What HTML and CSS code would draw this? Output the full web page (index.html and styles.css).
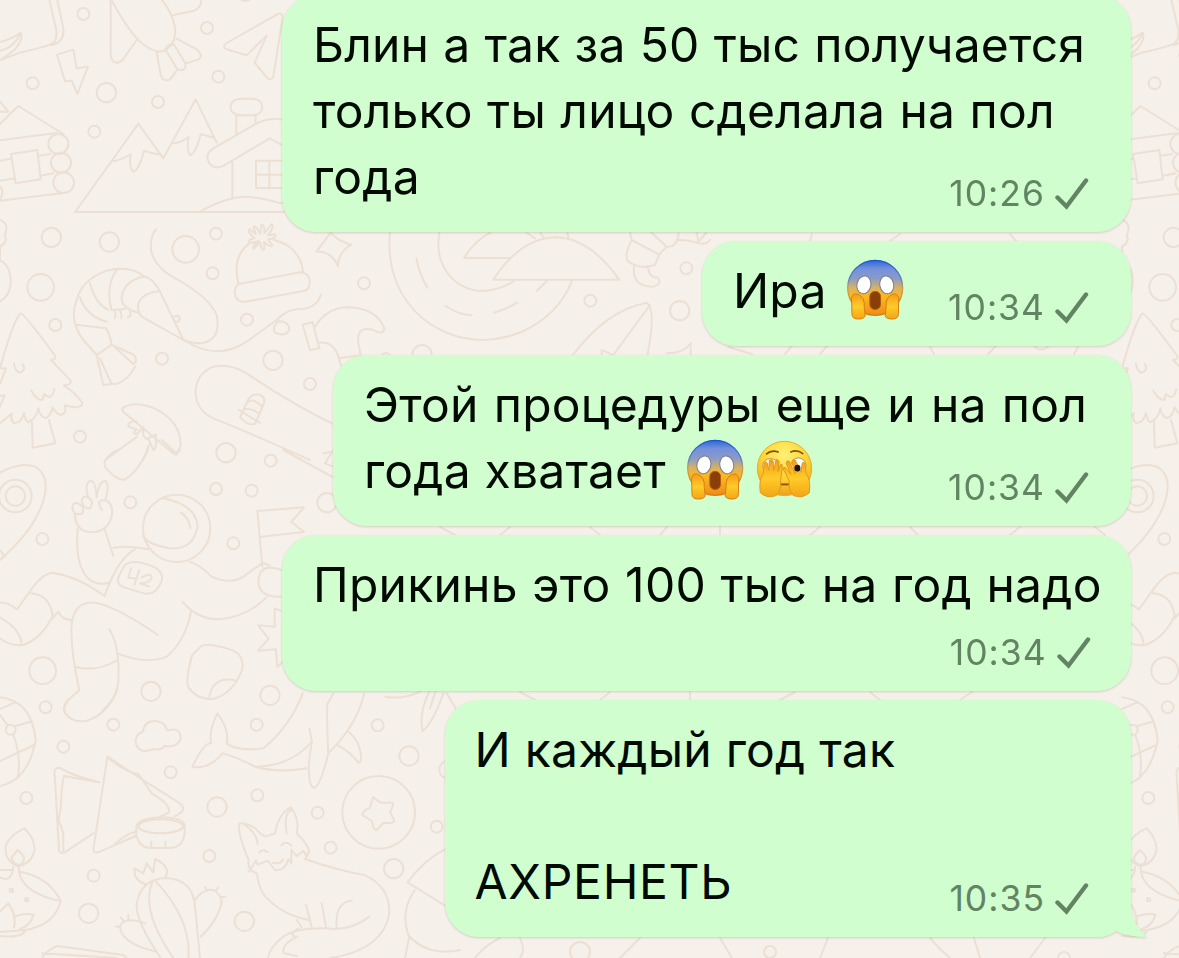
FILE: index.html
```html
<!DOCTYPE html>
<html lang="ru">
<head>
<meta charset="utf-8">
<title>Чат</title>
<link rel="stylesheet" href="styles.css">
</head>
<body>
<main class="chat">
<svg class="wallpaper" viewBox="0 0 1179 958" aria-hidden="true">
<defs>
<g id="tile">
 <g class="thirds" transform="scale(.33333)">
  <path d="M148 0Q160 50 168 85Q175 125 150 134Q120 145 60 158L0 181M172 0L190 85Q195 125 155 136M0 126Q35 118 62 98Q72 115 45 148Q25 166 0 181M0 152Q35 148 62 102"/>
  <path d="M171 164L220 149L230 205L264 200L232 282L215 242L195 243Z"/>
  <path d="M332 0V165Q335 190 353 188Q365 186 372 174L410 120M334 0Q375 75 410 115Q440 146 470 154Q495 157 508 140Q530 120 525 80Q515 35 486 0M516 46L582 32Q603 25 604 0M530 116L590 148Q612 168 595 178L558 190M470 156L482 225Q490 248 511 238L532 208M496 148L530 205Q545 217 556 204V190L522 134Q505 130 496 148"/>
  <path d="M675 132L835 41Q850 38 847 58L820 230Q812 244 802 234L764 188L800 106L740 166L680 148Q668 142 675 132Z"/>
  <path d="M225 636L330 490L415 371L490 475L587 298L650 428M342 484Q370 477 392 463Q386 505 400 515Q418 508 432 452Q455 461 484 464M521 430Q550 427 566 410Q558 455 572 466Q590 454 602 402L644 414M225 636H870M605 632Q680 590 740 590Q800 595 840 610L870 606"/>
  <path d="M725 296H755C798 296 798 346 755 346H725C680 346 680 296 725 296ZM709 346V405M767 346V370M866 362Q810 348 765 373L640 445Q612 462 628 490Q644 510 672 497L809 415L870 448M697 488V592M768 482H860M768 482V564H860M768 524H860M808 482V564"/>
  <path d="M0 372L55 318L190 402M0 421L170 399M0 602L195 578M33 462L112 450L122 538L47 550ZM0 482L33 476M113 468L150 462M0 542L45 535M122 527L160 520M0 335H25L0 305M0 558Q14 575 0 600"/>
  <circle cx="175" cy="432" r="30"/><circle cx="183" cy="488" r="30"/><circle cx="191" cy="548" r="31"/>
  <circle cx="250" cy="42" r="18"/><circle cx="98" cy="250" r="18"/><circle cx="319" cy="278" r="29"/><circle cx="474" cy="306" r="18"/><circle cx="283" cy="395" r="18"/><circle cx="621" cy="84" r="18"/><circle cx="655" cy="230" r="18"/><path d="M724 0Q736 6 748 0"/>
 </g>
 <g class="thirds" transform="translate(0 220) scale(.33333)">
  <circle cx="154" cy="52" r="29"/><circle cx="328" cy="66" r="29"/><circle cx="122" cy="202" r="40"/><circle cx="557" cy="88" r="40"/><circle cx="648" cy="41" r="18"/><circle cx="638" cy="160" r="18"/><circle cx="166" cy="315" r="18"/><circle cx="741" cy="299" r="18"/><circle cx="486" cy="416" r="18"/><circle cx="819" cy="421" r="29"/><circle cx="930" cy="492" r="18"/><circle cx="240" cy="650" r="18"/><circle cx="678" cy="698" r="29"/>
  <path d="M0 0Q30 10 14 45Q25 65 0 80V122Q34 135 32 195Q25 232 0 244"/>
  <path d="M469 28Q450 45 453 90Q464 145 535 180Q630 235 650 285Q665 360 605 370Q575 370 550 360L480 215Q460 175 430 168Q390 135 320 152Q245 180 230 240Q205 300 250 360L290 405L335 374Q330 345 318 325L228 314M550 360L425 290Q400 255 430 230Q450 215 480 214M430 170Q375 180 365 230Q362 265 415 278M350 150Q315 200 335 270L375 267M270 190Q285 250 325 270M240 232Q260 290 320 305M344 295Q348 285 345 270M364 295Q366 285 360 270M384 292Q396 285 390 275M290 405L310 495L335 492L300 415M335 374L402 405Q415 425 400 432L343 380M405 440Q385 480 350 492L335 492"/>
  <circle cx="530" cy="296" r="9"/>
  <path d="M552 360Q650 425 740 365L830 300Q860 270 890 268Q950 268 962 225M835 304Q870 305 868 330Q855 352 825 338Q815 322 835 304"/>
  <path d="M715 190Q695 105 752 68M823 60Q900 80 909 155M715 192L900 157Q932 160 929 190Q928 210 910 213L732 246Q707 246 704 218Q704 200 715 192M768 42L748 28Q740 35 764 54Q740 60 750 68Q770 66 775 62Q752 84 762 86L780 66Q785 95 793 88L792 66Q810 84 817 76L804 58Q832 55 825 43L804 46Q825 17 815 12L793 40Q794 10 784 15L781 42Q765 12 760 22Z"/>
  <path d="M0 445Q40 300 62 280Q70 278 166 408Q168 420 153 420L212 482Q215 495 192 496Q230 522 248 550Q242 570 194 556Q202 580 182 585Q166 580 158 562Q150 592 136 594Q120 590 115 565Q110 595 84 607Q75 600 72 578Q65 610 42 609Q30 600 36 580L0 610M42 430Q45 455 60 458Q80 450 68 432M94 512Q110 540 127 540L132 522Q155 545 163 508M0 492L18 445H0M0 560L14 527H0M96 602L98 683L166 670L147 600"/>
  <path d="M366 566Q400 540 465 566Q542 605 542 675Q535 702 520 700L370 576ZM410 603Q380 605 386 620L411 628Q392 640 411 642L430 620Q425 650 440 657L468 643Q470 690 460 690L447 660M316 720L411 650M430 720L447 675M528 700L485 660"/>
  <path d="M1000 612Q880 555 740 460Q690 430 640 440Q590 460 586 515Q588 570 640 595Q730 630 930 720M745 538Q755 520 780 524Q800 535 790 555L765 612Q745 618 720 592ZM740 550Q755 530 785 558M730 570Q750 560 776 580M716 570L780 608"/>
 </g>
 <g class="thirds" transform="translate(0 450) scale(.33333)">
  <path d="M0 68Q60 34 105 50Q150 75 132 145Q108 235 0 330M0 300L14 320"/><circle cx="46" cy="138" r="49"/><circle cx="46" cy="138" r="29"/>
  <circle cx="127" cy="267" r="18"/><circle cx="391" cy="157" r="18"/><circle cx="648" cy="117" r="18"/><circle cx="755" cy="122" r="18"/><circle cx="812" cy="32" r="18"/><circle cx="700" cy="280" r="18"/><circle cx="981" cy="158" r="29"/><circle cx="128" cy="662" r="40"/><circle cx="453" cy="724" r="29"/><circle cx="810" cy="736" r="29"/>
  <path d="M350 0Q300 30 318 55Q350 90 372 90Q410 70 444 0M516 0L528 15L540 0M850 0L1000 82M1000 0L975 40L1000 50M970 10L1000 5"/>
  <circle cx="530" cy="235" r="101"/><path d="M487 144Q590 165 593 230Q580 300 510 295Q440 282 430 258M543 188Q568 205 571 234"/>
  <path d="M265 145Q250 95 275 92Q287 98 290 142Q296 95 315 93Q330 100 316 150Q340 160 336 195Q325 245 275 247Q225 245 224 190M306 180Q285 150 315 150M245 152Q248 138 262 140Q285 155 270 175Q250 178 245 152ZM224 190Q208 165 228 158Q255 165 248 190Q234 195 224 190M233 237Q225 340 260 380Q285 410 326 398M314 237L340 318M340 293Q390 285 445 298M404 298Q350 330 314 438Q235 380 158 368Q130 370 100 410L51 478Q20 455 0 458M93 430Q150 435 158 498Q125 565 70 585Q30 590 0 565M0 503Q60 535 65 582M158 505L175 485Q185 510 215 510"/>
  <path d="M375 345Q400 325 460 350Q490 365 486 390Q470 435 435 431L375 413Q345 405 358 375ZM393 355L385 383L410 386M418 360L403 405M425 383Q455 365 455 385Q445 400 420 400L448 410"/>
  <path d="M474 555Q320 450 265 458Q215 465 214 540Q215 620 238 720L205 750Q188 770 195 788M328 538Q360 590 355 690Q352 745 308 780M225 650Q290 668 352 630M352 610Q440 645 500 620Q555 575 573 485M548 456Q595 510 660 508Q740 500 800 442M568 335Q600 345 635 380Q690 405 730 380L783 342Q795 335 810 350M787 350L772 183L912 172L874 216L912 246L784 260M845 360Q775 335 775 398Q780 445 848 440"/>
  <path d="M605 587Q640 580 700 602Q735 620 726 660Q700 730 640 747Q590 750 564 710Q557 680 577 615ZM628 740Q640 675 710 692M850 485L824 475V530L774 526L806 566L774 602L828 598L832 650L855 630"/>
 </g>
 <g class="thirds" transform="translate(0 690) scale(.33333)">
  <path d="M0 22Q95 32 107 150Q85 270 0 288M0 57L44 38M47 108L92 95M22 105L0 75M0 213L100 166M40 135Q65 200 53 265"/><circle cx="32" cy="119" r="15"/>
  <circle cx="137" cy="52" r="18"/><circle cx="340" cy="104" r="18"/><circle cx="190" cy="170" r="18"/><circle cx="79" cy="324" r="18"/><circle cx="512" cy="247" r="18"/><circle cx="281" cy="557" r="18"/><circle cx="266" cy="670" r="29"/><circle cx="628" cy="498" r="18"/><circle cx="651" cy="351" r="29"/><circle cx="772" cy="316" r="18"/><circle cx="770" cy="104" r="18"/><circle cx="733" cy="694" r="29"/><circle cx="953" cy="368" r="18"/><circle cx="992" cy="473" r="18"/><circle cx="1133" cy="106" r="18"/><circle cx="1227" cy="198" r="29"/><circle cx="1181" cy="536" r="29"/><circle cx="1310" cy="410" r="18"/><circle cx="1345" cy="239" r="27"/>
  <path d="M205 28Q185 50 195 68Q215 100 260 92Q320 75 352 0"/>
  <path d="M429 125Q433 92 467 93Q495 95 502 122Q540 108 542 145Q535 175 492 168Q485 182 460 177Q420 195 407 160Q404 132 429 125Z"/>
  <path d="M298 277Q220 258 178 233Q160 233 164 255L177 480Q180 492 193 488L280 430M298 277L192 258Q184 290 183 345L176 390L190 430V488M322 200L280 480Q282 490 295 487L407 438M322 200Q420 265 540 340Q565 360 525 378M322 200Q370 245 415 252L455 310Q515 345 506 368L480 380M407 425Q380 430 345 462"/>
  <ellipse cx="482" cy="409" rx="67" ry="21"/><path d="M409 410V435Q418 475 455 474H508Q548 474 554 430V405Q545 382 482 382Q415 385 409 410M454 455V470M496 455V470"/>
  <path d="M73 415Q108 450 103 485Q90 525 52 528Q10 510 18 465Q30 435 73 415ZM53 480Q85 505 64 522Q40 530 35 502ZM40 530Q35 580 0 562M0 540H37M56 532Q55 600 165 630L182 632Q145 560 60 545M182 632Q165 705 75 720L0 726M75 720Q70 745 0 738M0 665L25 640Q50 675 42 712M42 680Q70 668 101 674Q90 710 60 716"/><circle cx="34" cy="601" r="5"/><circle cx="80" cy="629" r="5"/>
  <path d="M577 230Q610 160 634 158Q625 125 652 70Q690 120 680 160Q710 185 790 175Q870 110 908 10M577 230Q625 240 668 190Q720 205 765 230Q840 250 920 235M765 230Q870 230 936 155L928 115M936 155Q915 270 940 294Q960 295 985 190Q980 110 982 42L1000 10M1092 10Q1075 100 985 190M1046 126Q1080 150 1084 205Q1080 225 1072 214Q1050 185 1014 166"/>
  <circle cx="1136" cy="367" r="109"/><path d="M1119 321L1141 338H1177Q1184 342 1170 365L1183 392Q1182 402 1150 398L1130 420Q1120 423 1116 393L1087 375Q1085 365 1110 353Z"/>
  <path d="M1156 20Q1210 30 1260 5M1290 0Q1255 70 1268 124Q1300 95 1330 10M1308 0L1290 55M1340 10L1370 60"/>
  <path d="M770 550Q740 540 746 510Q712 430 718 400Q760 402 780 430L797 440L825 430Q835 370 873 352Q900 390 890 430Q925 465 928 485L915 507M735 405Q770 430 773 462M860 430Q850 370 873 360M746 545L768 512L773 524L803 512L825 540Q855 545 865 508L874 520V480L890 498L910 482L917 495L928 485M778 488Q785 475 803 486M844 466Q858 450 874 466M818 518Q838 525 850 508M915 507Q1010 540 1095 556Q1170 590 1168 670Q1150 780 990 804M770 550Q780 610 805 628Q850 675 926 690M918 645L935 710M965 640L978 712M1055 632Q1005 635 1010 712M1108 680Q1050 725 980 715Q890 712 850 740Q810 770 804 804M890 690L905 712M895 715Q860 740 892 740Q840 765 852 790L890 798"/>
  <path d="M435 582Q400 570 404 535L430 550L440 520L460 548L465 507Q515 530 496 562M482 804Q405 690 410 640Q425 565 500 564Q580 570 585 650L600 804M458 575Q420 660 520 804M468 575Q575 690 565 804M583 632Q610 595 640 600Q675 620 660 655Q645 700 602 740M470 785Q360 760 360 708Q375 678 435 700M361 682L372 692M348 710H360M385 675V690M615 592L622 602M655 592L648 602M675 620L663 622M126 804Q140 780 172 768L370 795L380 804M126 790L350 804"/>
  <path d="M1340 475Q1270 510 1223 577L1340 650M1244 600Q1200 665 1225 735Q1280 800 1380 780M1228 740L1215 804"/>
 </g>
</g>
</defs>
<g class="ink">
 <use href="#tile"/><use href="#tile" x="1122"/>
 <g class="thirds" transform="translate(280 220) scale(.33333)">
  <path d="M110 94L152 38Q175 65 215 74Q175 95 174 138Q155 95 110 94"/>
  <circle cx="252" cy="190" r="18"/><circle cx="931" cy="242" r="18"/><circle cx="1219" cy="145" r="18"/><circle cx="1199" cy="272" r="29"/><circle cx="426" cy="404" r="29"/><circle cx="317" cy="415" r="16"/>
  <path d="M330 38C310 230 450 360 612 360C735 355 835 285 875 184M478 38C460 150 535 213 612 213Q665 208 700 184M409 114Q418 165 442 202M497 258Q535 284 575 286M642 278Q680 268 712 248M770 213L800 184M552 114H690M552 114Q585 60 632 38M740 38L765 55M640 179H1018Q930 55 828 52Q720 55 640 179M782 38L790 52M862 38L866 54"/>
  <path d="M68 314L98 306L118 385L90 390ZM104 322Q140 262 205 262Q290 265 313 325Q310 348 280 330Q225 315 236 375L242 406L176 415Q165 365 118 368M176 415L185 440"/>
  <path d="M1050 38L1055 60L1138 104L1160 80L1115 38M1055 60Q1030 110 1045 125Q1080 150 1125 135L1138 104M1160 80Q1190 85 1196 40M1196 60Q1230 60 1256 70L1250 38M1256 70Q1280 75 1290 60M1062 140Q1055 200 1120 200Q1150 190 1132 172Q1110 175 1104 145"/>
  <path d="M876 408Q980 270 1100 248Q1130 265 1102 408M1110 255L1000 405L965 390V408M1160 400Q1210 400 1232 370V408"/>
 </g>
 <path d="M728 347L752 354M785 354L792 346M820 354L827 346M930 347L934 354M988 354L996 346M1035 347Q1040 352 1048 347M1074 354L1078 347M440 527L455 535M500 535L510 527M590 527L600 535M660 535L667 527M720 527V535M810 535L820 527M910 527L918 535M1010 535L1020 527M1095 527L1105 535M520 692L535 700M600 700L610 692M690 692V700M780 700L795 692M870 692L880 700M960 700L972 692M700 240L706 233M810 241L812 234M890 241L900 234M1010 234L1016 241M930 938Q940 950 950 958M974 938L980 958M1030 958L1045 938M520 938Q526 950 520 958M620 958L640 938M720 938L732 958M820 958L828 938M475 958Q485 945 500 938"/>
 <circle cx="1064" cy="958" r="6"/><circle cx="770" cy="952" r="6"/><circle cx="580" cy="952" r="10"/>
</g>
</svg>

<svg class="symbols" aria-hidden="true">
<defs>
 <linearGradient id="fear" x1="0" y1="0" x2="0" y2="1"><stop offset="0" stop-color="#2d67d8"/><stop offset=".15" stop-color="#7490dc"/><stop offset=".33" stop-color="#8a9bc8"/><stop offset=".5" stop-color="#d7b260"/><stop offset=".65" stop-color="#fcb91e"/><stop offset="1" stop-color="#ef8b17"/></linearGradient>
 <linearGradient id="rim" x1="0" y1="0" x2="0" y2="1"><stop offset="0" stop-color="#1556d3"/><stop offset=".35" stop-color="#5b7ec8"/><stop offset=".5" stop-color="#cf9c45"/><stop offset="1" stop-color="#d97a10"/></linearGradient>
 <linearGradient id="palm" x1="0" y1="0" x2="0" y2="1"><stop offset="0" stop-color="#f39b1c"/><stop offset=".5" stop-color="#ffcb28"/><stop offset="1" stop-color="#f3a616"/></linearGradient>
 <radialGradient id="sun" cx=".5" cy=".25" r=".8"><stop offset="0" stop-color="#fff177"/><stop offset=".5" stop-color="#ffd633"/><stop offset="1" stop-color="#ed981c"/></radialGradient>
 <symbol id="scream" viewBox="46 26 172 184">
  <circle cx="131" cy="113" r="83" fill="url(#fear)" stroke="url(#rim)" stroke-width="4"/>
  <ellipse cx="97" cy="104" rx="21" ry="27" transform="rotate(12 97 104)" fill="#fff" stroke="#7c7c8c" stroke-width="3"/>
  <ellipse cx="166" cy="104" rx="21" ry="27" transform="rotate(-12 166 104)" fill="#fff" stroke="#7c7c8c" stroke-width="3"/>
  <rect x="115" y="124" width="32" height="54" rx="15" fill="#8a3f09" stroke="#a85a10" stroke-width="3"/>
  <path d="M60 145Q62 128 78 132Q101 141 98 172L101 197Q98 208 77 207Q62 206 61 194Z" fill="url(#palm)" stroke="#d57f12" stroke-width="3"/>
  <path d="M202 145Q200 128 184 132Q161 141 164 172L161 197Q164 208 185 207Q200 206 201 194Z" fill="url(#palm)" stroke="#d57f12" stroke-width="3"/>
 </symbol>
 <symbol id="peek" viewBox="283 30 172 176">
  <circle cx="369" cy="115" r="82" fill="url(#sun)" stroke="#e8ab29" stroke-width="3"/>
  <ellipse cx="327" cy="106" rx="24" ry="21" fill="#fff1d0" stroke="#bd935a" stroke-width="3"/>
  <ellipse cx="411" cy="106" rx="23" ry="23" fill="#fff" stroke="#b08c68" stroke-width="3"/>
  <path d="M315 71Q329 58 350 65M388 65Q407 57 424 70" fill="none" stroke="#815015" stroke-width="5" stroke-linecap="round"/>
  <path d="M358 163H384" stroke="#9b5409" stroke-width="6"/>
  <path d="M296 188Q291 150 304 132L308 98Q312 92 317 99L321 121L324 90Q331 84 335 94L336 122L344 88Q350 86 353 96L349 124L357 103Q363 100 363 111L357 151Q359 180 345 196Q318 208 296 188Z" fill="url(#palm)" stroke="#df9a1c" stroke-width="3"/>
  <path d="M444 188Q449 150 435 132L430 98Q425 92 422 101L419 126L401 89Q393 85 391 95L402 131L382 92Q375 90 374 99L389 133L371 111Q363 110 367 121L383 151Q380 180 395 196Q422 208 444 188Z" fill="url(#palm)" stroke="#df9a1c" stroke-width="3"/>
  <ellipse cx="408" cy="114" rx="9" ry="10" fill="#24150c"/>
 </symbol>
 <symbol id="tick" viewBox="0 0 34 32"><path d="M2.5 19.5L11.5 28.5L31 2.5" fill="none" stroke="#628463" stroke-width="4.4" stroke-linecap="round" stroke-linejoin="miter"/></symbol>
</defs>
</svg>

<article class="bubble w-full">
 <div class="text"><p class="line l1">Блин а так за 50 тыс получается</p><p class="line l2">только ты лицо сделала на пол</p><p class="line">года</p></div>
 <div class="meta"><time>10:26</time><svg class="tick"><use href="#tick"/></svg></div>
</article>
<article class="bubble w-short">
 <div class="text"><p class="line">Ира<svg class="emoji e1"><use href="#scream"/></svg></p></div>
 <div class="meta"><time>10:34</time><svg class="tick"><use href="#tick"/></svg></div>
</article>
<article class="bubble w-wide">
 <div class="text"><p class="line l5">Этой процедуры еще и на пол</p><p class="line">года хватает<svg class="emoji e2"><use href="#scream"/></svg><svg class="emoji e3"><use href="#peek"/></svg></p></div>
 <div class="meta"><time>10:34</time><svg class="tick"><use href="#tick"/></svg></div>
</article>
<article class="bubble w-full stacked">
 <div class="text"><p class="line l7">Прикинь это 100 тыс на год надо</p></div>
 <div class="meta"><time>10:34</time><svg class="tick"><use href="#tick"/></svg></div>
</article>
<article class="bubble w-mid">
 <div class="text"><p class="line l8">И каждый год так</p><p class="line"></p><p class="line l9">АХРЕНЕТЬ</p></div>
 <div class="meta"><time>10:35</time><svg class="tick"><use href="#tick"/></svg></div>
 <svg class="tail" viewBox="0 0 48 50"><path d="M31 0V8Q33 25 47 37Q28 37 16 31Q8 36 0 37V0Z" fill="#d0fecf"/></svg>
</article>
</main>
</body>
</html>
```
FILE: styles.css
```css
* { box-sizing: border-box; }
body { margin: 0; background: #f5f1ea; font-family: Inter, "Noto Sans", sans-serif; }
.chat {
  position: relative;
  width: 1179px;
  height: 958px;
  overflow: hidden;
  display: flex;
  flex-direction: column;
  align-items: flex-end;
  gap: 9px;
  padding-right: 48px;
}
.wallpaper { position: absolute; inset: 0; width: 1179px; height: 958px; }
.ink { fill: none; stroke: #ecdfd4; stroke-width: 2; stroke-linecap: round; stroke-linejoin: round; }
.thirds { stroke-width: 6; }
.symbols { position: absolute; width: 0; height: 0; }
.bubble {
  position: relative;
  flex: none;
  display: grid;
  padding: 17px 31px 22px 31px;
  border-radius: 34px;
  background: #d0fecf;
  filter: drop-shadow(0 1.5px 1px rgba(110, 90, 70, .24));
}
.bubble:first-of-type { margin-top: -5px; }
.w-full { width: 849px; }
.w-short { width: 429px; }
.w-wide { width: 798px; }
.w-mid { width: 686px; padding-left: 29.5px; }
.text, .meta { grid-area: 1 / 1; }
.line {
  display: flex;
  align-items: center;
  height: 66px;
  margin: 0;
  font-size: 48px;
  line-height: 66px;
  letter-spacing: .2px;
  white-space: nowrap;
  color: #000a00;
}
.l1 { word-spacing: .4px; }
.l2 { word-spacing: .7px; }
.l5 { word-spacing: 1.5px; }
.l7 { letter-spacing: .25px; word-spacing: .8px; }
.l8 { letter-spacing: .25px; }
.l9 { letter-spacing: .7px; }
.meta {
  align-self: end;
  justify-self: end;
  display: flex;
  align-items: center;
  gap: 10px;
  height: 36px;
  margin: 0 11px -2px 0;
  font-size: 35.5px;
  line-height: 36px;
  letter-spacing: 1px;
  color: #628463;
}
.tick { width: 34px; height: 32px; margin-bottom: 1px; }
.stacked { padding-bottom: 73px; }
.stacked .meta { margin-bottom: -53px; }
.emoji { flex: none; width: 57px; height: 61px; margin-bottom: 4px; }
.e1 { margin-left: 20px; }
.e2 { margin-left: 21px; }
.e3 { height: 59px; margin-left: 12px; }
.tail { position: absolute; right: -17px; bottom: -13px; width: 48px; height: 50px; }
```
